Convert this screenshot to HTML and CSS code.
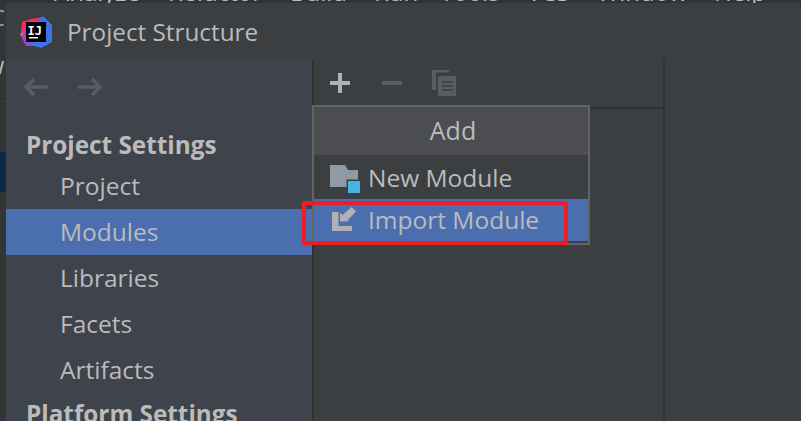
FILE: index.html
```html
<!DOCTYPE html>
<html lang="en">
<head>
<meta charset="UTF-8">
<meta name="viewport" content="width=device-width, initial-scale=1.0">
<title>Project Structure</title>
<link rel="stylesheet" href="styles.css">
</head>
<body>
  <!-- main menu of the IDE, almost hidden behind the dialog -->
  <div class="menuStrip">
    <div class="menuItems">
      <span class="m1">Analyze</span>
      <span class="m2">Refactor</span>
      <span class="m3">Build</span>
      <span class="m4">Run</span>
      <span class="m5">Tools</span>
      <span class="m6">VCS</span>
      <span class="m7">Window</span>
      <span class="m8">Help</span>
    </div>
  </div>

  <div class="desk">
    <div class="behind">
      <div class="behindC">C</div>
      <div class="behindW">W</div>
      <div class="behindRule"></div>
      <div class="behindSel"></div>
    </div>

    <div class="dialog">
      <div class="titleBar">
        <svg class="logo" width="32" height="32" viewBox="0 0 32 32">
          <polygon points="11,3 23,1 27,8 6,27 1,15 2,6" fill="#fe2857"/>
          <polygon points="0,18 5,14 8,24 3,23" fill="#fc801d"/>
          <polygon points="3,12 10,16 20,30 6,30 2,22" fill="#b13cc6"/>
          <polygon points="17,5 23,0 32,9 32,26 21,32 8,28" fill="#3e72e8"/>
          <rect x="6" y="6" width="20" height="20" fill="#000"/>
          <text class="logoText" x="7.500" y="19">IJ</text>
          <rect x="9" y="21" width="9" height="1.500" fill="#fff"/>
        </svg>
        <span class="titleText">Project Structure</span>
      </div>

      <div class="panes">
        <div class="sidebar">
          <div class="navIcons">
            <svg width="28" height="20" viewBox="0 0 28 20"><path d="M26 10H4M12 2l-8 8 8 8" fill="none" stroke="#5a5d60" stroke-width="3.4"/></svg>
            <svg width="28" height="20" viewBox="0 0 28 20"><path d="M2 10h22M16 2l8 8-8 8" fill="none" stroke="#5a5d60" stroke-width="3.4"/></svg>
          </div>
          <div class="heading headingTop">Project Settings</div>
          <div class="navItem">Project</div>
          <div class="navItem selected">Modules</div>
          <div class="navItem">Libraries</div>
          <div class="navItem">Facets</div>
          <div class="navItem">Artifacts</div>
          <div class="heading">Platform Settings</div>
        </div>

        <div class="listPane">
          <div class="toolbar">
            <svg width="20" height="20" viewBox="0 0 20 20"><path d="M0 8h8V0h4v8h8v4h-8v8H8v-8H0z" fill="#afb1b3"/></svg>
            <svg width="20" height="20" viewBox="0 0 20 20"><path d="M0 8h20v4H0z" fill="#5a5d60"/></svg>
            <svg class="copyIcon" width="24" height="26" viewBox="0 0 24 26">
              <path d="M0 0h17v2.500H4V20H0z" fill="#5a5d60"/>
              <path d="M6 6h18v20H6z" fill="#5a5d60"/>
              <path d="M10 12h11M10 16h11M10 20h11" stroke="#3c3f41" stroke-width="1.500"/>
            </svg>
          </div>

          <div class="popup">
            <div class="popupTitle">Add</div>
            <div class="popupItem">
              <svg width="32" height="32" viewBox="0 0 32 32">
                <path d="M0 4h15l3 5h10v17H0z" fill="#8e9ba5"/>
                <rect x="16.500" y="18.500" width="15.500" height="13.500" fill="#3c3f41"/>
                <rect x="18" y="20" width="12" height="12" fill="#40b6e0"/>
              </svg>
              New Module
            </div>
            <div class="popupItem active">
              <svg class="importIcon" width="32" height="30" viewBox="0 0 32 30">
                <path d="M2 7h6.500v14H22v5H2z" fill="#afb1b3"/>
                <path d="M10 16.500V7.500l2.500 2.500 9-8 4.500 4.500-8.500 9 1.500 1z" fill="#afb1b3"/>
              </svg>
              Import Module
            </div>
            <div class="redBox"></div>
          </div>
        </div>

        <div class="detailPane"></div>
      </div>
    </div>
  </div>
</body>
</html>
```

FILE: styles.css
```css
html, body {
  margin: 0;
  padding: 0;
  height: 100%;
  overflow: hidden;
}

body {
  background-color: #3c3f41;
  color: #bbbbbb;
  font-family: "Open Sans", "Noto Sans", sans-serif;
}

/* Strip of the IDE menu above the dialog */
.menuStrip {
  height: 3px;
  overflow: hidden;
  background-color: #313335;
}

.menuItems {
  position: relative;
  height: 3px;
  font-size: 24px;
  line-height: 24px;
  white-space: nowrap;
}

.menuItems span {
  position: absolute;
  top: -20px;
}

.m1 { left: 54px; }
.m2 { left: 168px; }
.m3 { left: 290px; }
.m4 { left: 374px; }
.m5 { left: 440px; }
.m6 { left: 527px; }
.m7 { left: 597px; }
.m8 { left: 714px; }

.desk {
  display: flex;
  height: 418px;
}

/* What is left of the IDE on the left of the dialog */
.behind {
  width: 6px;
  overflow: hidden;
  background-color: #333537;
  font-size: 22px;
  line-height: 22px;
}

.behindC {
  height: 22px;
  padding-top: 3px;
  margin-left: -9px;
  color: #a8a8a8;
}

.behindW {
  margin-top: 29px;
  margin-left: -16px;
  height: 17px;
  overflow: hidden;
}

.behindRule {
  height: 1px;
  margin-top: 24px;
  background-color: #2b2b2b;
}

.behindSel {
  height: 40px;
  margin-top: 53px;
  background-color: #0d2a45;
}

.dialog {
  flex: 1;
  display: flex;
  flex-direction: column;
  min-width: 0;
}

.titleBar {
  height: 56px;
  flex: none;
  display: flex;
  align-items: center;
  gap: 15px;
  padding-left: 14px;
  padding-top: 1px;
  box-sizing: border-box;
  background-color: #3c3f41;
}

.logo {
  flex: none;
}

.logoText {
  font-family: "DejaVu Sans Mono", monospace;
  font-size: 12px;
  font-weight: bold;
  fill: #ffffff;
}

.titleText {
  font-size: 24.3px;
}

.panes {
  flex: 1;
  display: flex;
  min-height: 0;
}

.sidebar {
  width: 306px;
  flex: none;
  overflow: hidden;
  background-color: #3f434b;
  border-right: 2px solid #323232;
}

.navIcons {
  height: 67px;
  display: flex;
  align-items: center;
  gap: 26px;
  padding-left: 16px;
  padding-bottom: 11px;
  box-sizing: border-box;
}

.heading {
  height: 42px;
  line-height: 42px;
  padding-left: 20px;
  font-size: 24.3px;
  font-weight: bold;
}

.headingTop {
  height: 37px;
  line-height: 37px;
}

.navItem {
  height: 46px;
  line-height: 46px;
  padding-left: 54px;
  font-size: 24.5px;
}

.selected {
  background-color: #4b6eaf;
}

.listPane {
  width: 349px;
  flex: none;
  position: relative;
  border-right: 2px solid #323232;
}

.toolbar {
  height: 48px;
  display: flex;
  align-items: center;
  gap: 32px;
  padding-left: 16px;
  border-bottom: 2px solid #323232;
}

.copyIcon {
  margin-left: -2px;
}

.detailPane {
  flex: 1;
  background-color: #3c3f41;
}

/* Add menu lies over the list pane */
.popup {
  position: absolute;
  left: -2px;
  top: 46px;
  width: 274px;
  background-color: #3c3f41;
  border: 2px solid #646464;
  padding-bottom: 2px;
}

.popupTitle {
  height: 48px;
  line-height: 46px;
  padding-left: 4px;
  text-align: center;
  font-size: 25px;
  background-color: #4b4d50;
}

.popupItem {
  height: 44px;
  display: flex;
  align-items: center;
  gap: 6px;
  padding-left: 16px;
  font-size: 24.5px;
}

.active {
  height: 40px;
  padding-bottom: 2px;
  background-color: #4b6eaf;
}

.importIcon {
  margin-top: 2px;
}

.redBox {
  position: absolute;
  left: -12px;
  top: 94px;
  width: 258px;
  height: 36px;
  border: 4px solid #ee1c25;
  border-radius: 2px;
}
```
